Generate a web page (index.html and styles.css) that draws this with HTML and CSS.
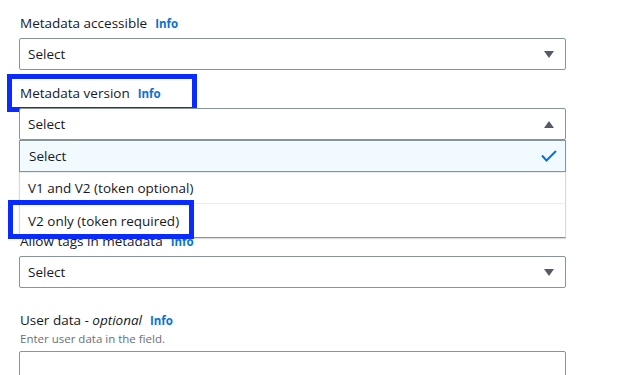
FILE: index.html
```html
<!DOCTYPE html>
<html>
<head>
<meta charset="utf-8">
<link rel="stylesheet" href="styles.css">
</head>
<body>
<form class="form">
  <div class="field">
    <div class="label-row"><span class="label">Metadata accessible</span><a class="info">Info</a></div>
    <div class="select">
      <span class="select-text">Select</span>
      <svg class="caret" width="10" height="7" viewBox="0 0 10 7"><path d="M0 0H10L5 7Z" fill="#545b64"/></svg>
    </div>
  </div>

  <div class="field field-open">
    <div class="label-row highlighted"><span class="label">Metadata version</span><a class="info">Info</a><span class="mark mark-label"></span></div>
    <div class="select-wrap">
      <div class="select">
        <span class="select-text">Select</span>
        <svg class="caret" width="10" height="7" viewBox="0 0 10 7"><path d="M0 7H10L5 0Z" fill="#545b64"/></svg>
      </div>
      <ul class="menu">
        <li class="option selected"><span>Select</span>
          <svg class="check" width="16" height="12" viewBox="0 0 16 12"><path d="M1 5.5L5.5 10.5L15 1" fill="none" stroke="#0972d3" stroke-width="2"/></svg>
        </li>
        <li class="option">V1 and V2 (token optional)</li>
        <li class="option last"><span>V2 only (token required)</span><span class="mark mark-option"></span></li>
      </ul>
    </div>
  </div>

  <div class="field field-tags">
    <div class="label-row"><span class="label">Allow tags in metadata</span><a class="info">Info</a></div>
    <div class="select">
      <span class="select-text">Select</span>
      <svg class="caret" width="10" height="7" viewBox="0 0 10 7"><path d="M0 0H10L5 7Z" fill="#545b64"/></svg>
    </div>
  </div>

  <div class="field field-user">
    <div class="label-row"><span class="label">User data - <i>optional</i></span><a class="info">Info</a></div>
    <div class="desc">Enter user data in the field.</div>
    <div class="textarea"></div>
  </div>
</form>
</body>
</html>
```
FILE: styles.css
```css
* { box-sizing: border-box; }
html, body { margin: 0; padding: 0; background: #fff; }
body {
  width: 623px;
  height: 375px;
  overflow: hidden;
  font-family: "Open Sans", Roboto, sans-serif;
  font-size: 13.5px;
  color: #16191f;
}
.form {
  padding: 12px 57px 0 19px;
  display: flex;
  flex-direction: column;
}
.field { display: flex; flex-direction: column; }
.field + .field { margin-top: 12px; }
.field-tags { margin-top: 90px !important; position: relative; z-index: 0; }
.field-user { margin-top: 21px !important; }
.field-open { position: relative; z-index: 2; }

.label-row {
  display: flex;
  align-items: baseline;
  height: 22px;
  line-height: 22px;
  margin-bottom: 4px;
  padding-left: 1px;
  position: relative;
}
.label { font-size: 13.5px; }
.info {
  margin-left: 8px;
  font-size: 11.5px;
  font-weight: 700;
  color: #0972d3;
}
.desc {
  font-size: 11.5px;
  line-height: 16px;
  color: #687078;
  margin-top: -4px;
  margin-bottom: 4px;
  padding-left: 1px;
}

.select {
  height: 32px;
  border: 1px solid #879596;
  border-radius: 2px;
  display: flex;
  align-items: center;
  justify-content: space-between;
  padding: 0 11px 0 8px;
  background: #fff;
}
.select-wrap { position: relative; }
.menu {
  position: absolute;
  left: 0;
  right: 0;
  top: 100%;
  margin: 0;
  padding: 0;
  list-style: none;
  background: #fff;
  border-left: 1px solid #d5dbdb;
  border-right: 1px solid #d5dbdb;
  border-bottom: 1px solid #879596;
  box-shadow: 0 1px 1px rgba(0,28,36,0.15);
}
.option {
  height: 31px;
  display: flex;
  align-items: center;
  justify-content: space-between;
  padding: 0 8px;
  border-top: 1px solid #eaeded;
  position: relative;
}
.option.selected {
  background: #f1faff;
  border: 1px solid #879596;
  margin: 0 -1px;
  padding: 0 8px 0 9px;
  height: 32px;
}
.option.last { height: 34px; }
.check { margin-right: 0; }

.textarea {
  height: 60px;
  border: 1px solid #879596;
  border-radius: 2px;
}

.mark {
  position: absolute;
  border: 5px solid #0a2bff;
  pointer-events: none;
}
.mark-label {
  left: -12px;
  top: -8px;
  width: 190px;
  height: 38px;
}
.mark-option {
  left: -12px;
  top: -4px;
  width: 186px;
  height: 39px;
}
```
